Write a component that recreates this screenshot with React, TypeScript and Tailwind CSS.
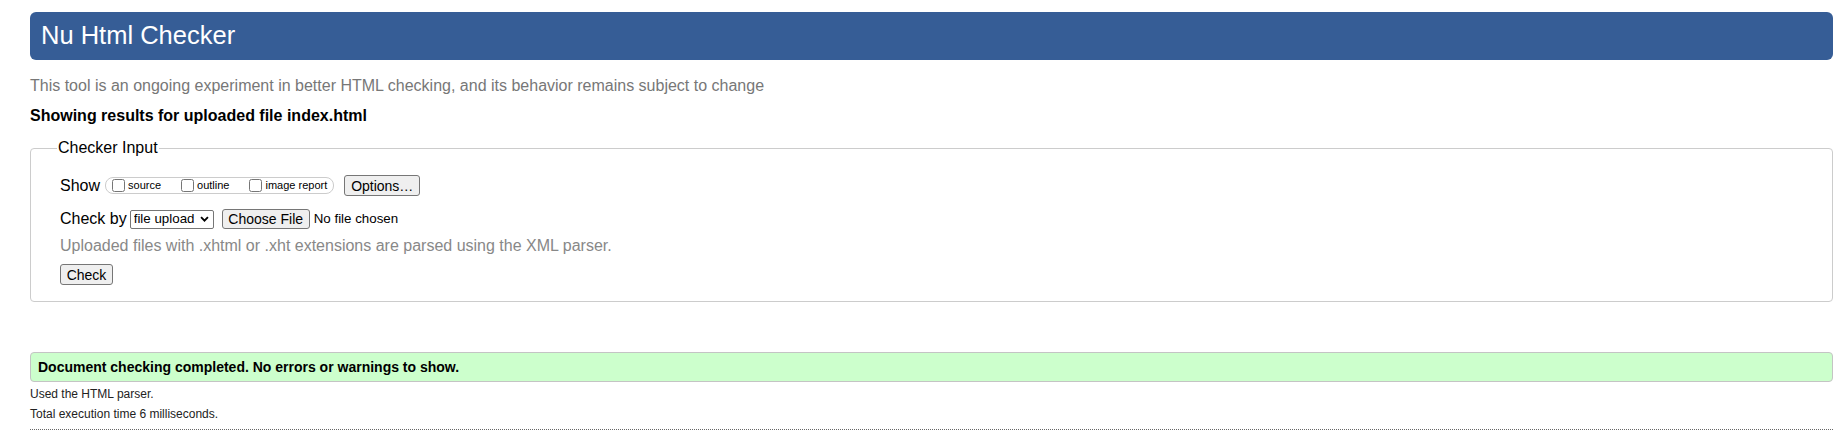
import React from "react"

function Check({ label }: { label: string }) {
  return (
    <label className="flex items-center gap-[3px]">
      <input type="checkbox" className="m-0 h-[13px] w-[13px]" />
      <span className="text-[11px] leading-none">{label}</span>
    </label>
  )
}

function Btn({ children, className = "" }: { children: React.ReactNode; className?: string }) {
  return (
    <button
      className={
        "flex items-center justify-center rounded-[3px] border border-[#767676] bg-[#efefef] text-[14px] leading-none text-black " +
        className
      }
    >
      {children}
    </button>
  )
}

export default function App() {
  return (
    <div className="min-h-[444px] bg-white pt-[12px] text-black" style={{ fontFamily: 'Arial, "Liberation Sans", sans-serif' }}>
      <header className="ml-[30px] mr-[5px] flex h-[48px] items-center rounded-[6px] bg-[#365d96] px-[11px]">
        <h1 className="text-[25.5px] leading-none text-white">Nu Html Checker</h1>
      </header>

      <p className="ml-[30px] mt-[16px] text-[16px] leading-[20px] text-[#777]">
        This tool is an ongoing experiment in better HTML checking, and its behavior remains subject to change
      </p>
      <p className="ml-[30px] mt-[10px] text-[16px] font-bold leading-[20px]">Showing results for uploaded file index.html</p>

      <form className="ml-[30px] mr-[5px] mt-[12px]">
        <fieldset className="rounded-[4px] border border-[#ccc] px-[29px] pb-[16px]">
          <legend className="-ml-[3px] px-[1px] text-[16px] leading-[20px]">Checker Input</legend>

          <div className="mt-[17px] flex h-[21px] items-center">
            <span className="text-[16px]">Show</span>
            <div className="ml-[5px] flex h-[17px] items-center gap-[20px] rounded-[8px] border border-[#ccc] pl-[6px] pr-[6px]">
              <Check label="source" />
              <Check label="outline" />
              <Check label="image report" />
            </div>
            <Btn className="ml-[10px] h-[21px] w-[76px]">Options…</Btn>
          </div>

          <div className="mt-[13px] flex h-[20px] items-center">
            <span className="text-[16px]">Check by</span>
            <div className="ml-[3px] flex h-[19px] w-[84px] items-center rounded-[2px] border border-[#767676] bg-white">
              <select className="h-full min-w-0 flex-1 appearance-none bg-transparent pl-[3px] text-[13.33px] leading-none outline-none">
                <option>file upload</option>
              </select>
              <svg width="9" height="6" viewBox="0 0 10 7" className="mr-[4px] shrink-0">
                <path d="M1 1.3 L5 5.3 L9 1.3" fill="none" stroke="#000" strokeWidth="2.2" />
              </svg>
            </div>
            <Btn className="ml-[8px] h-[20px] w-[88px]">Choose File</Btn>
            <span className="ml-[4px] text-[13.33px]">No file chosen</span>
          </div>

          <p className="mt-[7px] text-[16px] leading-[20px] text-[#888]">
            Uploaded files with .xhtml or .xht extensions are parsed using the XML parser.
          </p>

          <Btn className="mt-[8px] h-[21px] w-[53px]">Check</Btn>
        </fieldset>
      </form>

      <div className="ml-[30px] mr-[5px] mt-[50px] flex h-[30px] items-center rounded-[4px] border border-[#c4c4c4] bg-[#ccffcc] pl-[7px]">
        <span className="text-[14px] font-bold">Document checking completed. No errors or warnings to show.</span>
      </div>

      <div className="ml-[30px] mr-[5px] mt-[2px] text-[12px] leading-[20px] text-[#222]">
        <p>Used the HTML parser.</p>
        <p>Total execution time 6 milliseconds.</p>
        <div className="mt-[5px] border-t border-dotted border-[#666]" />
      </div>
    </div>
  )
}
